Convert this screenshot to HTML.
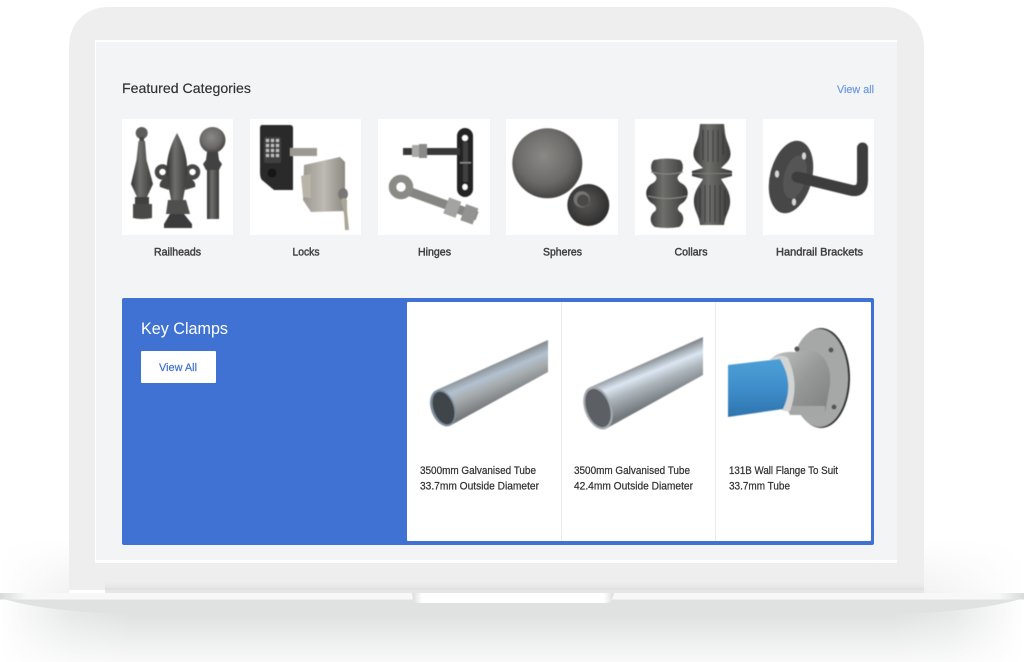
<!DOCTYPE html>
<html lang="en">
<head>
<meta charset="utf-8">
<title>Featured Categories</title>
<style>
html,body{margin:0;padding:0;background:#fff;width:1024px;height:662px;overflow:hidden}
svg{display:block}
text{font-family:"Liberation Sans",Arial,sans-serif}
.lbl{font-size:11px;fill:#404040;stroke:#404040;stroke-width:.45;text-anchor:middle}
.prod{font-size:11px;fill:#333;stroke:#333;stroke-width:.25}
</style>
</head>
<body>
<svg width="1024" height="662" viewBox="0 0 1024 662" xmlns="http://www.w3.org/2000/svg">
<defs>
<filter id="b" x="-10%" y="-10%" width="120%" height="120%"><feGaussianBlur stdDeviation=".45"/></filter>
<linearGradient id="m" x1="0" x2="1" y1="0" y2="0"><stop offset="0" stop-color="#333"/><stop offset=".4" stop-color="#6f6f6c"/><stop offset="1" stop-color="#393937"/></linearGradient>
<linearGradient id="lidb" x1="0" x2="0" y1="0" y2="1"><stop offset="0" stop-color="#eeeeee" stop-opacity="0"/><stop offset="1" stop-color="#dedede"/></linearGradient>
<linearGradient id="shadow" x1="0" x2="0" y1="0" y2="1"><stop offset="0" stop-color="#e0e2e1"/><stop offset=".25" stop-color="#e0e2e1"/><stop offset=".6" stop-color="#eceded"/><stop offset="1" stop-color="#f9f9f9"/></linearGradient>
<linearGradient id="hf" x1="0" x2="1" y1="0" y2="0"><stop offset="0" stop-color="#fff" stop-opacity="1"/><stop offset=".07" stop-color="#fff" stop-opacity=".25"/><stop offset=".13" stop-color="#fff" stop-opacity="0"/><stop offset=".87" stop-color="#fff" stop-opacity="0"/><stop offset=".93" stop-color="#fff" stop-opacity=".25"/><stop offset="1" stop-color="#fff" stop-opacity="1"/></linearGradient>
<linearGradient id="end" x1="0" x2="1" y1="0" y2="0"><stop offset="0" stop-color="#d8dad9"/><stop offset=".025" stop-color="#f8f8f8"/><stop offset=".975" stop-color="#f8f8f8"/><stop offset="1" stop-color="#d8dad9"/></linearGradient>
<linearGradient id="glowL" x1="0" x2="1" y1="0" y2="0"><stop offset="0" stop-color="#fff"/><stop offset="1" stop-color="#f2f2f2"/></linearGradient>
<linearGradient id="glowR" x1="1" x2="0" y1="0" y2="0"><stop offset="0" stop-color="#fff"/><stop offset="1" stop-color="#f2f2f2"/></linearGradient>
<linearGradient id="wv" x1="0" x2="0" y1="0" y2="1"><stop offset="0" stop-color="#fff" stop-opacity="1"/><stop offset="1" stop-color="#fff" stop-opacity="0"/></linearGradient>
<linearGradient id="nl" x1="0" x2="1" y1="0" y2="0"><stop offset="0" stop-color="#dcdcdc"/><stop offset=".05" stop-color="#fff"/><stop offset=".95" stop-color="#fff"/><stop offset="1" stop-color="#dcdcdc"/></linearGradient>
<radialGradient id="sph" cx=".45" cy=".4" r=".65"><stop offset="0" stop-color="#8b8986"/><stop offset=".6" stop-color="#6b6a68"/><stop offset="1" stop-color="#3c3b3a"/></radialGradient>
<radialGradient id="sph2" cx=".45" cy=".45" r=".6"><stop offset="0" stop-color="#5a5958"/><stop offset="1" stop-color="#2b2a2a"/></radialGradient>
<linearGradient id="t1" gradientUnits="userSpaceOnUse" x1="490" y1="364" x2="505" y2="400"><stop offset="0" stop-color="#83898b"/><stop offset=".3" stop-color="#b3c1d0"/><stop offset=".55" stop-color="#a6abad"/><stop offset="1" stop-color="#75797b"/></linearGradient>
<linearGradient id="t2" gradientUnits="userSpaceOnUse" x1="642" y1="362" x2="658" y2="402"><stop offset="0" stop-color="#7f8589"/><stop offset=".3" stop-color="#dbe6f2"/><stop offset=".55" stop-color="#aeb6bc"/><stop offset="1" stop-color="#73797d"/></linearGradient>
<linearGradient id="bl" x1="0" x2="0" y1="0" y2="1"><stop offset="0" stop-color="#4d9fd6"/><stop offset=".5" stop-color="#3f8ecb"/><stop offset="1" stop-color="#2e74ad"/></linearGradient>
<linearGradient id="fit" x1="0" x2="1" y1="0" y2="1"><stop offset="0" stop-color="#bfc1c0"/><stop offset=".5" stop-color="#979998"/><stop offset="1" stop-color="#7e807f"/></linearGradient>
<linearGradient id="sil" x1="0" x2="1" y1="0" y2="0"><stop offset="0" stop-color="#9b9890"/><stop offset=".5" stop-color="#bdbab3"/><stop offset="1" stop-color="#8b8981"/></linearGradient>
</defs>

<!-- soft glow beside lid -->
<rect x="0" y="540" width="69" height="53" fill="url(#glowL)"/>
<rect x="924" y="540" width="100" height="53" fill="url(#glowR)"/>
<rect x="0" y="540" width="69" height="53" fill="url(#wv)"/>
<rect x="924" y="540" width="100" height="53" fill="url(#wv)"/>

<!-- lid -->
<path d="M69 590V47C69 23 85 7 109 7H884C908 7 924 23 924 47V590Z" fill="#eeeeee"/>
<rect x="105" y="580" width="819" height="10" fill="url(#lidb)"/>
<rect x="105" y="590" width="819" height="3" fill="#e6e6e6"/>

<!-- screen -->
<rect x="95" y="40" width="802" height="523" fill="#fff"/>
<rect x="96" y="42" width="801" height="518" fill="#f3f4f6"/>

<!-- base -->
<rect x="0" y="600" width="1024" height="62" fill="url(#shadow)"/>
<rect x="0" y="600" width="1024" height="62" fill="url(#hf)"/>
<path d="M0 598C40 610 90 614 170 615L854 615C934 614 985 610 1024 598Z" fill="#e0e2e1"/>
<rect x="0" y="593" width="1024" height="6.500" fill="url(#end)"/>
<path d="M412 593H614L612 600Q611 603 606 603H420Q414 603 413 600Z" fill="url(#nl)"/>

<!-- heading -->
<text x="122" y="93" font-size="14" fill="#2f3135" stroke="#2f3135" stroke-width=".15" textLength="129" lengthAdjust="spacingAndGlyphs">Featured Categories</text>
<text x="837" y="93" font-size="11" fill="#6e9ae0" stroke="#6e9ae0" stroke-width=".2" textLength="37" lengthAdjust="spacingAndGlyphs">View all</text>

<!-- category cards -->
<rect x="122" y="119" width="111" height="116" fill="#fff"/>
<rect x="250" y="119" width="111" height="116" fill="#fff"/>
<rect x="378" y="119" width="112" height="116" fill="#fff"/>
<rect x="506" y="119" width="112" height="116" fill="#fff"/>
<rect x="635" y="119" width="111" height="116" fill="#fff"/>
<rect x="763" y="119" width="111" height="116" fill="#fff"/>

<g filter="url(#b)">
<!-- railheads -->
<circle cx="141.700" cy="133" r="6" fill="#5d5d5b"/>
<rect x="139.500" y="137" width="4.500" height="4" fill="#444"/>
<path d="M138.500 141H145L146.500 160L153 184L147 197H137L131 184L136.500 160Z" fill="url(#m)"/>
<path d="M135 197H149V204H135Z" fill="#3f3f3e"/>
<path d="M133 204H152V218Q142 220 133 218Z" fill="#484846"/>
<circle cx="162.500" cy="172" r="5.500" fill="none" stroke="#474745" stroke-width="4.500"/>
<circle cx="192.500" cy="172" r="5.500" fill="none" stroke="#474745" stroke-width="4.500"/>
<path d="M177 133C171 144 166 158 167 172C167 183 170 192 171 200H183C184 192 187 183 187 172C188 158 183 144 177 133Z" fill="url(#m)"/>
<path d="M168 176Q158 181 160 187L169 190ZM186 176Q197 181 195 187L185 190Z" fill="#454543"/>
<path d="M168 200H186L190 214H166Z" fill="#4f4f4d"/>
<path d="M170 214H184L192 224V228H164V224Z" fill="#3b3b3a"/>
<circle cx="212.500" cy="140" r="13" fill="url(#sph)"/>
<path d="M207 152H218L219 160L222 164L219 170H206L203 164L206 160Z" fill="#434342"/>
<rect x="207" y="170" width="12" height="49" fill="url(#m)"/>

<!-- locks -->
<path d="M262 125H290Q293 125 293 128V190H274L262 180Q260 178 260 172V128Q260 125 262 125Z" fill="#2b2b2c"/>
<rect x="264" y="137" width="17" height="26" rx="2" fill="#3f3f40"/>
<g fill="#bdbdbd"><rect x="266" y="139" width="3" height="3"/><rect x="271" y="139" width="3" height="3"/><rect x="276" y="139" width="3" height="3"/><rect x="266" y="144" width="3" height="3"/><rect x="271" y="144" width="3" height="3"/><rect x="276" y="144" width="3" height="3"/><rect x="266" y="149" width="3" height="3"/><rect x="271" y="149" width="3" height="3"/><rect x="276" y="149" width="3" height="3"/><rect x="266" y="154" width="3" height="3"/><rect x="271" y="154" width="3" height="3"/><rect x="276" y="154" width="3" height="3"/></g>
<circle cx="272" cy="173" r="4.500" fill="#161616"/>
<rect x="290" y="148" width="27" height="8" fill="#9c9a92"/>
<path d="M304 165L340 157L345 162V211L311 212L303 200Z" fill="url(#sil)"/>
<path d="M301 176L311 174V198L303 197Z" fill="#b8b4a8"/>
<ellipse cx="343" cy="194" rx="5" ry="6" fill="#777"/>
<path d="M341 200Q344 196 347 200V210L349 230L345 230L344 214Z" fill="#aaa695"/>

<!-- hinges -->
<rect x="457" y="128" width="16" height="69" rx="8" fill="#232324"/>
<circle cx="465" cy="138" r="3" fill="#fff"/>
<rect x="462.500" y="184" width="5" height="6" rx="2.500" fill="#fff"/>
<rect x="463" y="142" width="5" height="40" fill="#3f3f3f"/>
<rect x="460" y="162" width="11" height="1.500" fill="#888"/>
<path d="M403 148H460V155H403Z" fill="#383838"/>
<rect x="412" y="145" width="7" height="12" fill="#a9a9a6"/>
<rect x="419" y="144" width="8" height="14" fill="#8a8a88"/>
<path d="M408 191L477 216" stroke="#858582" stroke-width="9"/>
<circle cx="401" cy="187" r="8.500" fill="none" stroke="#8a8a87" stroke-width="7.500"/>
<rect x="446" y="199" width="13" height="17" transform="rotate(20 452 207)" fill="#a3a3a0"/>
<rect x="463" y="206" width="13" height="17" transform="rotate(20 470 214)" fill="#939391"/>

<!-- spheres -->
<circle cx="547.300" cy="163.300" r="35" fill="url(#sph)"/>
<circle cx="588.300" cy="205" r="21" fill="url(#sph2)"/>
<circle cx="581.700" cy="199.300" r="8" fill="#777573"/>
<circle cx="583" cy="200.500" r="6" fill="#4a4948"/>

<!-- collars -->
<path d="M654 160Q667 157 680 160C684 163 684 172 679 175C676 178 678 181 681 183C690 187 690 199 681 204C677 207 677 210 680 212C685 216 684 224 679 227Q667 229 655 227C650 224 649 216 654 212C657 210 657 207 653 204C644 199 644 187 653 183C656 181 658 178 655 175C650 172 650 163 654 160Z" fill="url(#m)"/>
<path d="M651 172Q667 176 683 172M648 196Q667 201 687 196" fill="none" stroke="#8a8a87" stroke-width="1"/>
<path d="M700 124H724L725 133C726 142 731 147 730.500 155C730 161 724 165 721 168L732 171V176L721 179C725 186 731 192 730 204C729 212 725 216 724 225H700C699 216 695 212 694 204C693 192 699 186 703 179L692 176V171L703 168C700 165 694 161 693.500 155C693 147 698 142 699 133Z" fill="url(#m)"/>
<g stroke="#2d2d2d" stroke-width=".8"><path d="M703 130V160M708 130V162M713 130V162M718 130V162M723 133V155M700 188V218M705 185V222M710 185V222M715 185V222M720 185V222M725 190V216"/></g>
<path d="M692 173.500H732" stroke="#7a7a78" stroke-width="1"/>

<!-- bracket -->
<ellipse cx="791" cy="177" rx="21" ry="37" transform="rotate(14 791 177)" fill="#474747"/>
<ellipse cx="795" cy="177" rx="11" ry="22" transform="rotate(14 795 177)" fill="#555"/>
<ellipse cx="804" cy="156" rx="2" ry="3.500" fill="#d8d8d8"/>
<ellipse cx="777" cy="174" rx="2" ry="3.500" fill="#d8d8d8"/>
<ellipse cx="794" cy="202" rx="2" ry="3.500" fill="#d8d8d8"/>
<path d="M797 177L850 190Q862 193 862.500 181V148" fill="none" stroke="#3e3e3e" stroke-width="11" stroke-linecap="round"/>
</g>

<!-- labels -->
<text class="lbl" x="177.500" y="255.500" textLength="47" lengthAdjust="spacingAndGlyphs">Railheads</text>
<text class="lbl" x="306" y="255.500" textLength="27" lengthAdjust="spacingAndGlyphs">Locks</text>
<text class="lbl" x="434.500" y="255.500" textLength="33" lengthAdjust="spacingAndGlyphs">Hinges</text>
<text class="lbl" x="562.500" y="255.500" textLength="39" lengthAdjust="spacingAndGlyphs">Spheres</text>
<text class="lbl" x="691" y="255.500" textLength="33" lengthAdjust="spacingAndGlyphs">Collars</text>
<text class="lbl" x="819.500" y="255.500" textLength="87" lengthAdjust="spacingAndGlyphs">Handrail Brackets</text>

<!-- key clamps panel -->
<rect x="122" y="298" width="752" height="247" rx="2" fill="#3f72d2"/>
<rect x="407" y="302" width="464" height="239" rx="1" fill="#fff"/>
<rect x="561" y="302" width="1" height="239" fill="#ececec"/>
<rect x="715" y="302" width="1" height="239" fill="#ececec"/>
<text x="141" y="334" font-size="17" fill="#fff" textLength="87" lengthAdjust="spacingAndGlyphs">Key Clamps</text>
<rect x="141" y="351" width="75" height="32" rx="1" fill="#fff"/>
<text x="159" y="371" font-size="11" fill="#3f72d2" stroke="#3f72d2" stroke-width=".2" textLength="38" lengthAdjust="spacingAndGlyphs">View All</text>

<g filter="url(#b)">
<!-- tube 1 -->
<path d="M436.500 390L548 340V372L449.500 426Z" fill="url(#t1)"/>
<ellipse cx="443" cy="408" rx="12" ry="19" transform="rotate(-20 443 408)" fill="#7f8e9c"/>
<ellipse cx="443.500" cy="408" rx="10" ry="17" transform="rotate(-20 443.500 408)" fill="#3f4449"/>
<!-- tube 2 -->
<path d="M590.500 387L703 337V375L605.500 429Z" fill="url(#t2)"/>
<ellipse cx="598" cy="408" rx="13.500" ry="22.300" transform="rotate(-20 598 408)" fill="#a5aaae"/>
<ellipse cx="598" cy="408" rx="11.500" ry="20" transform="rotate(-20 598 408)" fill="#5b6065"/>
<!-- flange -->
<ellipse cx="821" cy="378" rx="29" ry="50" fill="#2f2f2f"/>
<ellipse cx="819.500" cy="378" rx="28.500" ry="49" fill="#a6a8a7"/>
<path d="M772 358Q780 351 795 352L815 351Q832 360 830 385L825 413H795Q785 413 786 405L772 405Z" fill="url(#fit)"/>
<path d="M786 406H825V415H790Z" fill="#a5a7a6"/>
<circle cx="797" cy="349" r="2.500" fill="#555"/>
<circle cx="831" cy="350" r="2.500" fill="#555"/>
<circle cx="834" cy="407" r="2.500" fill="#555"/>
<!-- blue tube -->
<path d="M770 359Q780 353 788 358Q800 384 790 411Q782 412 780 408Z" fill="#d2d4d3"/>
<path d="M728 365L780 359Q795 384 783 409L728 417Z" fill="url(#bl)"/>
</g>

<!-- product text -->
<text class="prod" x="420" y="474" textLength="116" lengthAdjust="spacingAndGlyphs">3500mm Galvanised Tube</text>
<text class="prod" x="420" y="489.500" textLength="119" lengthAdjust="spacingAndGlyphs">33.7mm Outside Diameter</text>
<text class="prod" x="574" y="474" textLength="116" lengthAdjust="spacingAndGlyphs">3500mm Galvanised Tube</text>
<text class="prod" x="574" y="489.500" textLength="119" lengthAdjust="spacingAndGlyphs">42.4mm Outside Diameter</text>
<text class="prod" x="729" y="474" textLength="109" lengthAdjust="spacingAndGlyphs">131B Wall Flange To Suit</text>
<text class="prod" x="729" y="489.500" textLength="61" lengthAdjust="spacingAndGlyphs">33.7mm Tube</text>
</svg>
</body>
</html>
